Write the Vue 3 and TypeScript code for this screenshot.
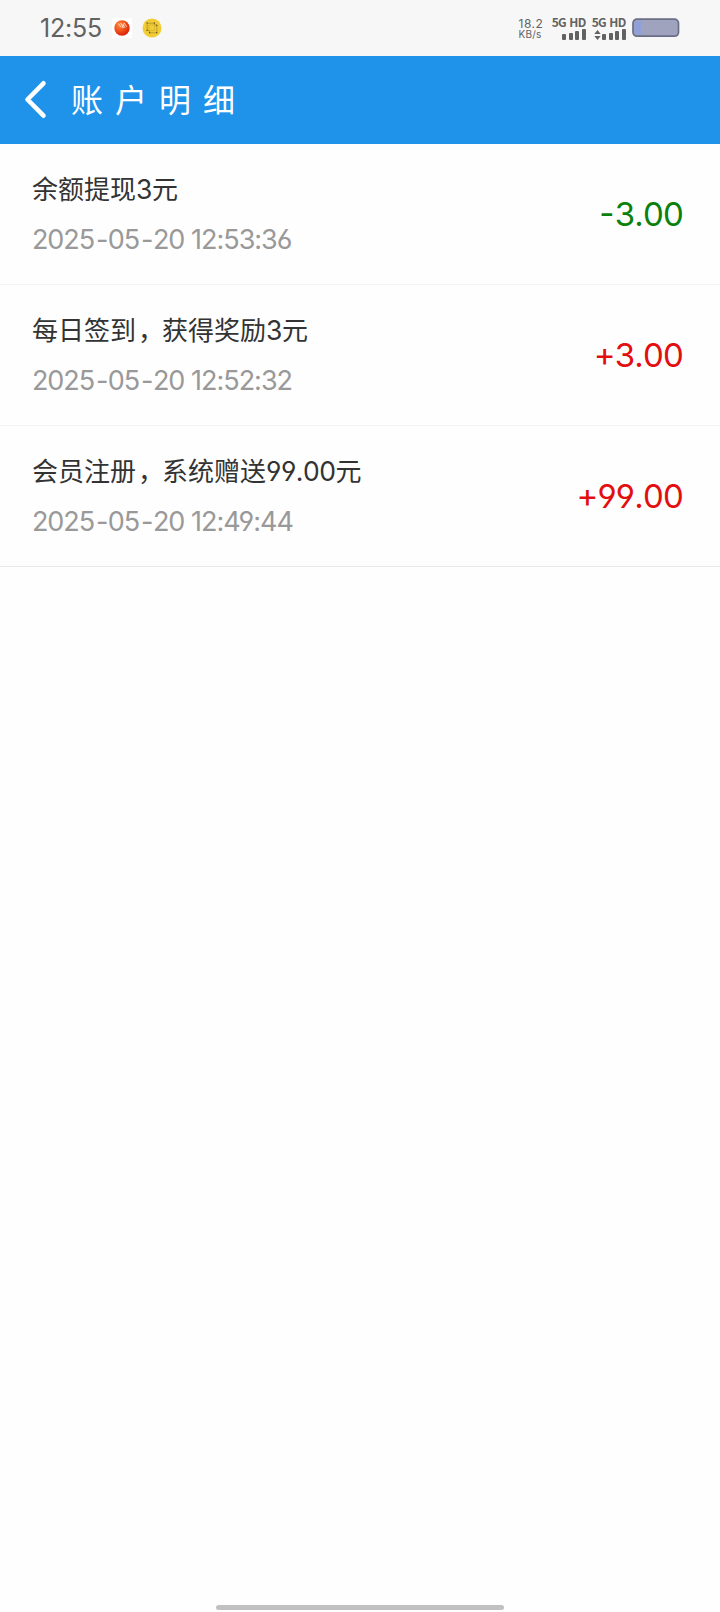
<script setup lang="ts">
interface Run { text: string; kind: 'cjk' | 'comma' | 'num' }
interface RecordItem { title: Run[]; date: string[]; time: string; sign: string; amount: string }

const runs = (s: string): Run[] =>
  (s.match(/[\d.]+|，|[^\d.，]+/g) ?? []).map((text) => ({
    text,
    kind: /^\d/.test(text) ? 'num' : text === '，' ? 'comma' : 'cjk',
  }))
const dateParts = (s: string): string[] => s.split(/(-)/)

const records: RecordItem[] = [
  { title: runs('余额提现3元'), date: dateParts('2025-05-20'), time: '12:53:36', sign: '-', amount: '3.00' },
  { title: runs('每日签到，获得奖励3元'), date: dateParts('2025-05-20'), time: '12:52:32', sign: '+', amount: '3.00' },
  { title: runs('会员注册，系统赠送99.00元'), date: dateParts('2025-05-20'), time: '12:49:44', sign: '+', amount: '99.00' },
]
const bars = [6, 7.5, 9.5, 11.5]
</script>

<template>
  <div class="screen">
    <div class="status">
      <span class="clock">12:55</span>
      <svg class="app-icon" width="20" height="20" viewBox="0 0 20 20">
        <defs>
          <radialGradient id="ball" cx="0.35" cy="0.3" r="0.8">
            <stop offset="0" stop-color="#ff8a3c" />
            <stop offset="0.5" stop-color="#f0501a" />
            <stop offset="1" stop-color="#d01808" />
          </radialGradient>
        </defs>
        <rect width="20" height="20" fill="#fff" />
        <circle cx="10" cy="10" r="7.7" fill="url(#ball)" />
        <path d="M6.300 5.500l3 4M8.700 5l2.800 5M11.200 6.500l1.600 3.300M12 4.800l2.600 4M10.500 9.500l.8-4" fill="none" stroke="#fff" stroke-opacity=".75" stroke-width=".9" />
      </svg>
      <svg class="coin-icon" width="20" height="20" viewBox="0 0 20 20">
        <circle cx="10" cy="10" r="9.5" fill="#f2cc35" />
        <path d="M5.200 5.200h7.200v1.800h2.400v7.800H7.500v-2L5.200 12.300z" fill="none" stroke="#a58b28" stroke-width=".7" />
        <path d="M7 7h5.500v5.500H7z" fill="none" stroke="#c8a52e" stroke-width=".5" />
        <path d="M4.600 4.600h1v1h-1zM11.900 4.600h1v1h-1zM4.600 11.800h1v1h-1zM14.300 6.800h1v1h-1zM7.100 14.200h1v1h-1zM14.300 14.200h1v1h-1z" fill="#2c2610" />
      </svg>
      <div class="speed"><span class="rate">18.2</span><span class="unit">KB/s</span></div>
      <div class="sim">
        <span class="net">5G HD</span>
        <div class="bars"><i v-for="h in bars" :key="h" class="bar" :style="{ height: h + 'px' }"></i></div>
      </div>
      <div class="sim">
        <span class="net">5G HD</span>
        <div class="bars">
          <svg class="arrows" width="7" height="10" viewBox="0 0 7 10"><path d="M3.500 0L6.700 4H.3zM3.500 10L6.700 6H.3z" fill="#626262" /></svg>
          <i v-for="h in bars" :key="h" class="bar" :style="{ height: h + 'px' }"></i>
        </div>
      </div>
      <svg class="battery" width="48" height="20" viewBox="0 0 48 20">
        <rect x="1" y="1.200" width="45.500" height="17" rx="4" fill="#9fa3bd" stroke="#6a6e86" stroke-width="1.700" />
        <path d="M5 3h4v13.400H5a2.300 2.300 0 0 1-2.300-2.300V5.300A2.300 2.300 0 0 1 5 3z" fill="#8da0dc" />
      </svg>
    </div>
    <header class="nav">
      <svg class="back" width="24" height="40" viewBox="0 0 24 40"><path d="M19.500 3.300L3.500 19.500 19.500 35.700" fill="none" stroke="#fff" stroke-width="4.600" stroke-linecap="round" stroke-linejoin="round" /></svg>
      <h1 class="heading">账户明细</h1>
    </header>
    <main class="list">
      <div v-for="r in records" :key="r.time" class="row">
        <div class="info">
          <div class="title"><span v-for="(t, i) in r.title" :key="i" :class="t.kind">{{ t.text }}</span></div>
          <div class="date"><span class="day"><span v-for="(p, i) in r.date" :key="i" :class="{ dash: p === '-' }">{{ p }}</span></span><span class="time">{{ r.time }}</span></div>
        </div>
        <div class="amount" :class="r.sign === '-' ? 'out' : 'in'"><span class="sign">{{ r.sign }}</span><span>{{ r.amount }}</span></div>
      </div>
    </main>
    <div class="home"></div>
  </div>
</template>

<style>
body { margin: 0; background: #fefefe; }
</style>
<style scoped>
.screen { width: 720px; height: 1612px; display: flex; flex-direction: column; overflow: hidden; background: #fefefe; font-family: Inter, "Noto Sans CJK SC", sans-serif; font-feature-settings: "cv03", "cv04"; }
.status { height: 56px; flex: none; display: flex; align-items: center; background: #f7f7f7; color: #626262; box-sizing: border-box; padding: 0 40.500px 0 40px; }
.clock { width: 72px; font-size: 25px; line-height: 30px; letter-spacing: -0.2px; white-space: nowrap; }
.app-icon { flex: none; }
.coin-icon { flex: none; margin-left: 10px; }
.speed { margin-left: auto; width: 34px; display: flex; flex-direction: column; }
.rate { font-size: 12px; line-height: 11px; letter-spacing: 0.500px; }
.unit { font-size: 10px; line-height: 10px; letter-spacing: 0.2px; }
.sim { display: flex; flex-direction: column; align-items: flex-end; width: 33px; margin-right: 7px; }
.sim + .sim { margin-right: 6px; }
.net { font: 700 12px/12px "Noto Sans CJK SC", sans-serif; letter-spacing: -0.7px; word-spacing: 1.200px; white-space: nowrap; margin-bottom: 1px; }
.bars { display: flex; align-items: flex-end; gap: 2.500px; height: 11px; }
.bar { width: 4px; border-radius: 1px; background: #626262; }
.arrows { margin-right: -1px; }
.battery { flex: none; }
.nav { height: 88px; flex: none; display: flex; align-items: center; background: #1f93ea; color: #fff; }
.back { margin-left: 24px; }
.heading { margin: 0 0 4px 23px; font: 400 32px/48px "Noto Sans CJK SC", sans-serif; letter-spacing: 12px; }
.row { height: 141px; box-sizing: border-box; border-bottom: 1px solid #f3f3f3; padding: 0 37px 0 32px; display: flex; justify-content: space-between; align-items: center; }
.row:last-child { border-bottom-color: #e8e8e8; }
.info { display: flex; flex-direction: column; gap: 16px; }
.title { height: 36px; display: flex; align-items: baseline; font-size: 26px; line-height: 36px; color: #333; }
.cjk, .comma { font-family: "Noto Sans CJK SC", sans-serif; }
.comma { width: 24px; padding-left: 2px; white-space: nowrap; overflow: visible; }
.num { font-size: 26.500px; letter-spacing: -0.500px; font-kerning: none; }
.date { height: 36px; display: flex; font-size: 27px; line-height: 36px; color: #999; }
.day { width: 159px; letter-spacing: -1.100px; }
.dash { margin: 0 0.500px 0 2px; }
.time { letter-spacing: -1px; }
.amount { display: flex; font-size: 33px; line-height: 44px; letter-spacing: -0.800px; font-kerning: none; }
.in .sign, .out .sign { line-height: 43px; }
.out .sign { margin-right: 1px; }
.out { color: #0b810b; }
.in { color: #e20f0f; }
.home { width: 288px; height: 5px; margin: auto auto 2px; border-radius: 3px; background: #c1c1c1; }
</style>
